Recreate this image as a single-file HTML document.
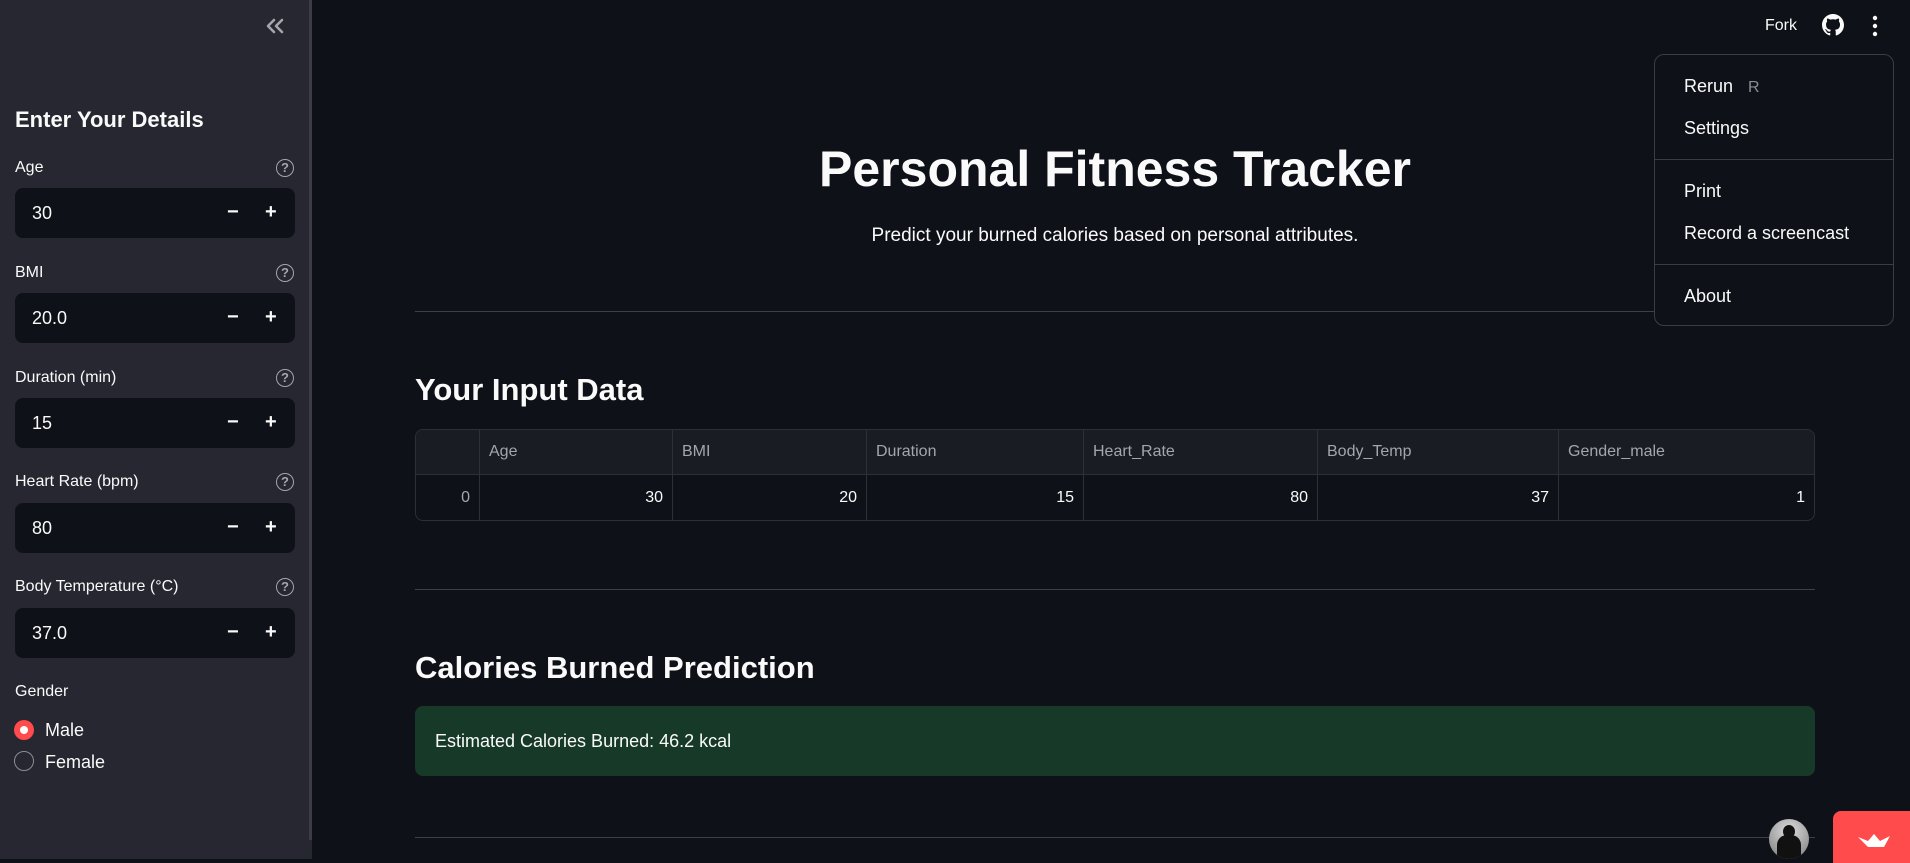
<!DOCTYPE html>
<html><head><meta charset="utf-8"><style>
*{box-sizing:border-box;margin:0;padding:0}
body{width:1910px;height:859px;overflow:hidden;background:#0e1117;font-family:"Liberation Sans",sans-serif;color:#fafafa;position:relative}
.sb{position:absolute;left:0;top:0;width:312px;height:859px;background:#262730}
.sbar{position:absolute;left:309px;top:0;width:3px;height:840px;background:#3b3c45}
.abs{position:absolute}
.lbl{position:absolute;left:15px;font-size:16px}
.q{position:absolute;left:276px;width:18px;height:18px;border:1.6px solid #a3a6ad;border-radius:50%;color:#a3a6ad;font-size:13px;font-weight:bold;text-align:center;line-height:15px}
.inp{position:absolute;left:15px;width:280px;height:50px;background:#0e1117;border-radius:8px}
.inp span{position:absolute;left:17px;top:15px;font-size:18px}
.inp i{position:absolute;font-style:normal;font-size:20px;top:13px;font-weight:bold}
.hr{position:absolute;left:415px;width:1400px;height:1px;background:#3d4048}
table{position:absolute;left:415px;top:429px;width:1400px;border-collapse:separate;border-spacing:0;border:1px solid #2d3039;border-radius:8px;font-size:16px;overflow:hidden}
td{border-right:1px solid #2d3039;height:45px;padding:0 9px;color:#fafafa}
tr:first-child td{background:#1a1c24;color:#a3a6ad;border-bottom:1px solid #2d3039}
td:last-child{border-right:none}
.menu{position:absolute;left:1654px;top:54px;width:240px;height:272px;background:#0e1117;border:1px solid #3a3d45;border-radius:10px}
.menu div{position:absolute;left:29px;font-size:18px}
.menu hr{position:absolute;left:0;width:238px;border:none;height:1px;background:#3a3d45}
</style></head><body>
<div class="sb"></div><div class="sbar"></div>
<svg class="abs" style="left:265px;top:17px" width="20" height="18" viewBox="0 0 20 18" fill="none" stroke="#a3a6ad" stroke-width="2.6" stroke-linecap="round" stroke-linejoin="round"><path d="M9 3 L3 9 L9 15 M17 3 L11 9 L17 15"/></svg>
<div class="abs" style="left:15px;top:107px;font-size:22px;font-weight:bold">Enter Your Details</div>

<div class="lbl" style="top:159px">Age</div><div class="q" style="top:159px">?</div>
<div class="inp" style="top:188px"><span>30</span><i style="left:212px">−</i><i style="left:250px">+</i></div>
<div class="lbl" style="top:264px">BMI</div><div class="q" style="top:264px">?</div>
<div class="inp" style="top:293px"><span>20.0</span><i style="left:212px">−</i><i style="left:250px">+</i></div>
<div class="lbl" style="top:369px">Duration (min)</div><div class="q" style="top:369px">?</div>
<div class="inp" style="top:398px"><span>15</span><i style="left:212px">−</i><i style="left:250px">+</i></div>
<div class="lbl" style="top:473px">Heart Rate (bpm)</div><div class="q" style="top:473px">?</div>
<div class="inp" style="top:503px"><span>80</span><i style="left:212px">−</i><i style="left:250px">+</i></div>
<div class="lbl" style="top:578px">Body Temperature (°C)</div><div class="q" style="top:578px">?</div>
<div class="inp" style="top:608px"><span>37.0</span><i style="left:212px">−</i><i style="left:250px">+</i></div>
<div class="lbl" style="top:683px">Gender</div>
<div class="abs" style="left:14px;top:720px;width:20px;height:20px;border-radius:50%;background:#ff4b4b"><div style="position:absolute;left:6px;top:6px;width:8px;height:8px;border-radius:50%;background:#fff"></div></div>
<div class="abs" style="left:45px;top:720px;font-size:18px">Male</div>
<div class="abs" style="left:14px;top:751px;width:20px;height:20px;border-radius:50%;border:1.5px solid #8a8d96"></div>
<div class="abs" style="left:45px;top:752px;font-size:18px">Female</div>

<div class="abs" style="left:1765px;top:17px;font-size:16px">Fork</div>
<svg class="abs" style="left:1822px;top:14px" width="22" height="22" viewBox="0 0 16 16"><path fill="#fafafa" d="M8 0C3.58 0 0 3.58 0 8c0 3.540 2.29 6.53 5.47 7.59.4.07.55-.17.55-.38 0-.19-.01-.82-.01-1.490-2.010.37-2.53-.49-2.69-.94-.09-.23-.48-.94-.82-1.13-.28-.15-.68-.52-.01-.53.63-.01 1.08.58 1.23.82.72 1.21 1.87.87 2.33.66.07-.52.28-.87.51-1.07-1.78-.2-3.64-.89-3.64-3.95 0-.87.31-1.59.82-2.15-.08-.2-.36-1.02.08-2.12 0 0 .67-.21 2.2.82.64-.18 1.32-.27 2-.27.68 0 1.36.09 2 .27 1.53-1.04 2.2-.82 2.2-.82.44 1.1.16 1.92.08 2.12.51.56.82 1.27.82 2.15 0 3.07-1.87 3.75-3.65 3.95.29.25.54.73.54 1.48 0 1.07-.01 1.93-.01 2.2 0 .21.15.46.55.38A8.013 8.013 0 0016 8c0-4.42-3.58-8-8-8z"/></svg>
<svg class="abs" style="left:1870px;top:14px" width="10" height="24"><circle cx="5" cy="4" r="2.2" fill="#fafafa"/><circle cx="5" cy="12" r="2.2" fill="#fafafa"/><circle cx="5" cy="20" r="2.2" fill="#fafafa"/></svg>

<div class="abs" style="left:415px;width:1400px;top:140px;text-align:center;font-size:50px;font-weight:bold">Personal Fitness Tracker</div>
<div class="abs" style="left:415px;width:1400px;top:225px;text-align:center;font-size:19px">Predict your burned calories based on personal attributes.</div>
<div class="hr" style="top:311px"></div>
<div class="abs" style="left:415px;top:372px;font-size:31px;font-weight:bold">Your Input Data</div>
<table>
<tr><td style="width:64px"></td><td style="width:193px">Age</td><td style="width:194px">BMI</td><td style="width:217px">Duration</td><td style="width:234px">Heart_Rate</td><td style="width:241px">Body_Temp</td><td>Gender_male</td></tr>
<tr><td style="text-align:right;color:#a3a6ad">0</td><td style="text-align:right">30</td><td style="text-align:right">20</td><td style="text-align:right">15</td><td style="text-align:right">80</td><td style="text-align:right">37</td><td style="text-align:right">1</td></tr>
</table>
<div class="hr" style="top:589px"></div>
<div class="abs" style="left:415px;top:650px;font-size:31px;font-weight:bold">Calories Burned Prediction</div>
<div class="abs" style="left:415px;top:706px;width:1400px;height:70px;background:#173928;border-radius:8px;font-size:18px;padding:25px 20px">Estimated Calories Burned: 46.2 kcal</div>
<div class="hr" style="top:837px"></div>

<div class="menu">
<div style="top:21px">Rerun <span style="color:#8a8d96;font-size:16px;margin-left:10px">R</span></div>
<div style="top:63px">Settings</div>
<hr style="top:104px">
<div style="top:126px">Print</div>
<div style="top:168px">Record a screencast</div>
<hr style="top:209px">
<div style="top:231px">About</div>
</div>

<div class="abs" style="left:1769px;top:819px;width:40px;height:40px;border-radius:50%;background:radial-gradient(circle at 50% 30%,#ddd,#777);overflow:hidden"><div style="position:absolute;left:8px;top:16px;width:24px;height:30px;background:#111;border-radius:10px 10px 0 0"></div><div style="position:absolute;left:14px;top:6px;width:12px;height:13px;background:#111;border-radius:50%"></div></div>
<div class="abs" style="left:1833px;top:811px;width:80px;height:52px;background:#ff4b4b;border-radius:8px 0 0 0"><svg style="position:absolute;left:25px;top:22px" width="32" height="16"><path d="M0 4 L10 14 L26 14 L32 3 L22 8 L16 1 L10 8 Z" fill="#fff"/></svg></div>
</body></html>
